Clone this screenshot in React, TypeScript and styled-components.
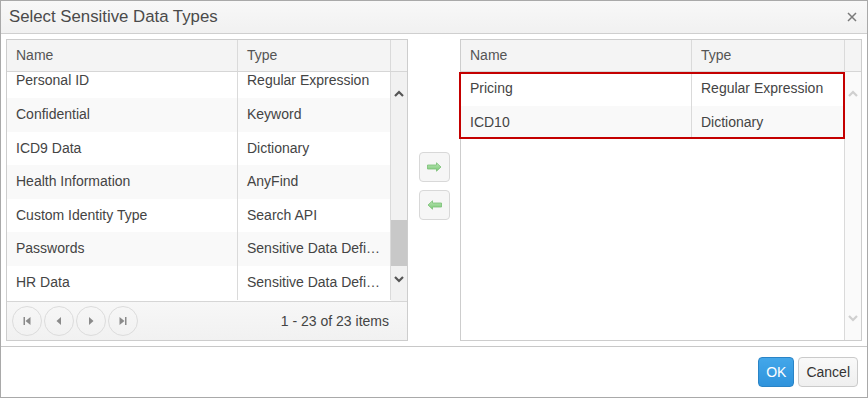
import React from "react";
import styled, { createGlobalStyle, css } from "styled-components";

const GlobalStyle = createGlobalStyle`
  html, body { margin: 0; padding: 0; background: #fff; }
  body { font-family: "Liberation Sans", Arial, sans-serif; font-size: 14px; color: #444; }
  * { box-sizing: border-box; }
`;

const Dialog = styled.div`
  width: 868px;
  height: 398px;
  border: 1px solid #a9a9a9;
  display: flex;
  flex-direction: column;
  background: #fff;
`;

const TitleBar = styled.div`
  height: 33px;
  flex: none;
  border-bottom: 1px solid #cfcfcf;
  background: linear-gradient(#f8f8f8, #f1f1f1);
  display: flex;
  align-items: center;
  justify-content: space-between;
  padding: 0 10px 0 8px;
`;

const Title = styled.span`
  font-size: 16.8px;
  color: #4a4a4a;
`;

const CloseButton = styled.button`
  border: none;
  background: none;
  padding: 0;
  width: 10px;
  height: 10px;
  display: flex;
  cursor: pointer;
`;

const Content = styled.div`
  flex: none;
  display: flex;
  padding: 5px;
  height: 312px;
`;

const GridBox = styled.div`
  width: 402px;
  height: 302px;
  border: 1px solid #cdcdcd;
  display: flex;
  flex-direction: column;
  flex: none;
`;

const HeaderRow = styled.div`
  display: grid;
  grid-template-columns: 231px 153px 16px;
  height: 32px;
  flex: none;
  border-bottom: 1px solid #d6d6d6;
  background: #f4f4f4;
`;

const HeaderCell = styled.div`
  padding: 0 9px;
  line-height: 31px;
  color: #555;
  border-right: 1px solid #dadada;
  &:last-child { border-right: none; }
`;

const Body = styled.div<{ $clip?: boolean }>`
  flex: 1;
  display: flex;
  min-height: 0;
  ${(p) => p.$clip && css`overflow: hidden;`}
`;

const RowsViewport = styled.div<{ $clip?: boolean }>`
  flex: 1;
  min-width: 0;
  ${(p) => (p.$clip ? css`overflow: hidden;` : css`border-right: 1px solid #dadada;`)}
`;

const RowsTrack = styled.div<{ $scrollTop: number }>`
  margin-top: ${(p) => -p.$scrollTop}px;
`;

const Row = styled.div<{ $alt: boolean }>`
  display: grid;
  grid-template-columns: 231px 153px;
  height: 33.6px;
  background: ${(p) => (p.$alt ? "#f9f9f9" : "#fff")};
`;

const Cell = styled.div`
  padding: 0 9px;
  line-height: 33.6px;
  border-right: 1px solid #dadada;
  white-space: nowrap;
  overflow: hidden;
  text-overflow: ellipsis;
  color: #444;
`;

const RightRow = styled(Row)`
  grid-template-columns: 231px 152px;
  & > div:last-child { border-right: none; }
`;

const Selection = styled.div`
  position: relative;
  &::after {
    content: "";
    position: absolute;
    top: 0;
    bottom: 0;
    left: -2px;
    right: -1px;
    border: 2px solid #c40000;
    pointer-events: none;
  }
`;

const ScrollCol = styled.div<{ $disabled?: boolean }>`
  width: 16px;
  flex: none;
  display: flex;
  flex-direction: column;
  padding: 13px 0 13px;
  background: ${(p) => (p.$disabled ? "#fafafa" : "#f1f1f1")};
  color: ${(p) => (p.$disabled ? "#cfcfcf" : "#555")};
`;

const ScrollArrow = styled.div`
  height: 17px;
  flex: none;
  display: flex;
  align-items: center;
  justify-content: center;
`;

const ScrollTrack = styled.div`
  flex: 1;
  display: flex;
  flex-direction: column;
`;

const Thumb = styled.div<{ $top: number; $height: number }>`
  margin-top: ${(p) => p.$top}px;
  height: ${(p) => p.$height}px;
  background: #c8c8c8;
`;

const Pager = styled.div`
  height: 39px;
  flex: none;
  border-top: 1px solid #d6d6d6;
  background: linear-gradient(#f7f7f7, #f1f1f1);
  display: flex;
  align-items: center;
  justify-content: space-between;
  padding: 0 18px 0 5px;
`;

const PagerButtons = styled.div`
  display: flex;
  gap: 2px;
`;

const PagerButton = styled.button`
  width: 30px;
  height: 30px;
  border-radius: 50%;
  border: 1px solid #dcdcdc;
  background: transparent;
  display: flex;
  align-items: center;
  justify-content: center;
  padding: 0;
  color: #8a8a8a;
`;

const PagerInfo = styled.span`
  color: #444;
`;

const Mover = styled.div`
  width: 52px;
  flex: none;
  display: flex;
  flex-direction: column;
  align-items: center;
  gap: 8px;
  padding-top: 113px;
`;

const MoveButton = styled.button`
  width: 31px;
  height: 30px;
  border: 1px solid #d8d8d8;
  border-radius: 4px;
  background: #f6f6f6;
  display: flex;
  align-items: center;
  justify-content: center;
  padding: 0;
`;

const Footer = styled.div`
  flex: 1;
  border-top: 1px solid #c8c8c8;
  display: flex;
  justify-content: flex-end;
  align-items: flex-start;
  gap: 4px;
  padding: 10px 9px 0 0;
`;

const Button = styled.button<{ $primary?: boolean }>`
  height: 30px;
  padding: 0 7px;
  border-radius: 4px;
  font-family: "Liberation Sans", Arial, sans-serif;
  font-size: 14px;
  ${(p) =>
    p.$primary
      ? css`
          background: linear-gradient(#43a7ea, #2f93dc);
          border: 1px solid #2a84c6;
          color: #fff;
        `
      : css`
          background: linear-gradient(#f9f9f9, #efefef);
          border: 1px solid #cacaca;
          color: #333;
        `}
`;

const ChevronUp = () => (
  <svg width="10" height="7" viewBox="0 0 10 7">
    <path d="M1 6 L5 2 L9 6" fill="none" stroke="currentColor" strokeWidth="2.2" />
  </svg>
);
const ChevronDown = () => (
  <svg width="10" height="7" viewBox="0 0 10 7">
    <path d="M1 1 L5 5 L9 1" fill="none" stroke="currentColor" strokeWidth="2.2" />
  </svg>
);

const FirstIcon = () => (
  <svg width="8" height="8" viewBox="0 0 8 8" fill="currentColor">
    <rect x="0.5" y="0" width="1.5" height="8" />
    <path d="M7.5 0 V8 L2.5 4 Z" />
  </svg>
);
const PrevIcon = () => (
  <svg width="6" height="8" viewBox="0 0 6 8" fill="currentColor">
    <path d="M5 0 V8 L0.5 4 Z" />
  </svg>
);
const NextIcon = () => (
  <svg width="6" height="8" viewBox="0 0 6 8" fill="currentColor">
    <path d="M1 0 V8 L5.5 4 Z" />
  </svg>
);
const LastIcon = () => (
  <svg width="8" height="8" viewBox="0 0 8 8" fill="currentColor">
    <path d="M0.5 0 V8 L5.5 4 Z" />
    <rect x="6" y="0" width="1.5" height="8" />
  </svg>
);

const GreenArrow = ({ dir }: { dir: "right" | "left" }) => (
  <svg width="15" height="10" viewBox="0 0 15 10" style={dir === "left" ? { transform: "scaleX(-1)" } : undefined}>
    <defs>
      <linearGradient id={`g-${dir}`} x1="0" y1="0" x2="0" y2="1">
        <stop offset="0" stopColor="#b9e6b4" />
        <stop offset="1" stopColor="#7cc877" />
      </linearGradient>
    </defs>
    <path
      d="M0.5 3 H9.5 V0.8 L14 5 L9.5 9.2 V7 H0.5 Z"
      fill={`url(#g-${dir})`}
      stroke="#79bf74"
      strokeWidth="0.8"
      strokeLinejoin="round"
    />
  </svg>
);

const CloseIcon = () => (
  <svg width="10" height="10" viewBox="0 0 10 10">
    <path d="M1 1 L9 9 M9 1 L1 9" stroke="#7a7a7a" strokeWidth="1.5" />
  </svg>
);

const available = [
  ["Personal ID", "Regular Expression"],
  ["Confidential", "Keyword"],
  ["ICD9 Data", "Dictionary"],
  ["Health Information", "AnyFind"],
  ["Custom Identity Type", "Search API"],
  ["Passwords", "Sensitive Data Definition"],
  ["HR Data", "Sensitive Data Definition"],
];

const selected = [
  ["Pricing", "Regular Expression"],
  ["ICD10", "Dictionary"],
];

export default function App() {
  return (
    <>
      <GlobalStyle />
      <Dialog>
        <TitleBar>
          <Title>Select Sensitive Data Types</Title>
          <CloseButton aria-label="Close">
            <CloseIcon />
          </CloseButton>
        </TitleBar>
        <Content>
          <GridBox>
            <HeaderRow>
              <HeaderCell>Name</HeaderCell>
              <HeaderCell>Type</HeaderCell>
              <HeaderCell />
            </HeaderRow>
            <Body $clip>
              <RowsViewport $clip>
                <RowsTrack $scrollTop={7.6}>
                  {available.map(([name, type], i) => (
                    <Row key={name} $alt={i % 2 === 1}>
                      <Cell>{name}</Cell>
                      <Cell>{type}</Cell>
                    </Row>
                  ))}
                </RowsTrack>
              </RowsViewport>
              <ScrollCol>
                <ScrollArrow>
                  <ChevronUp />
                </ScrollArrow>
                <ScrollTrack>
                  <Thumb $top={118} $height={46} />
                </ScrollTrack>
                <ScrollArrow>
                  <ChevronDown />
                </ScrollArrow>
              </ScrollCol>
            </Body>
            <Pager>
              <PagerButtons>
                <PagerButton aria-label="First page"><FirstIcon /></PagerButton>
                <PagerButton aria-label="Previous page"><PrevIcon /></PagerButton>
                <PagerButton aria-label="Next page"><NextIcon /></PagerButton>
                <PagerButton aria-label="Last page"><LastIcon /></PagerButton>
              </PagerButtons>
              <PagerInfo>1 - 23 of 23 items</PagerInfo>
            </Pager>
          </GridBox>
          <Mover>
            <MoveButton aria-label="Add"><GreenArrow dir="right" /></MoveButton>
            <MoveButton aria-label="Remove"><GreenArrow dir="left" /></MoveButton>
          </Mover>
          <GridBox>
            <HeaderRow>
              <HeaderCell>Name</HeaderCell>
              <HeaderCell>Type</HeaderCell>
              <HeaderCell />
            </HeaderRow>
            <Body>
              <RowsViewport>
                <Selection>
                  {selected.map(([name, type], i) => (
                    <RightRow key={name} $alt={i % 2 === 1}>
                      <Cell>{name}</Cell>
                      <Cell>{type}</Cell>
                    </RightRow>
                  ))}
                </Selection>
              </RowsViewport>
              <ScrollCol $disabled>
                <ScrollArrow>
                  <ChevronUp />
                </ScrollArrow>
                <ScrollTrack />
                <ScrollArrow>
                  <ChevronDown />
                </ScrollArrow>
              </ScrollCol>
            </Body>
          </GridBox>
        </Content>
        <Footer>
          <Button $primary>OK</Button>
          <Button>Cancel</Button>
        </Footer>
      </Dialog>
    </>
  );
}
